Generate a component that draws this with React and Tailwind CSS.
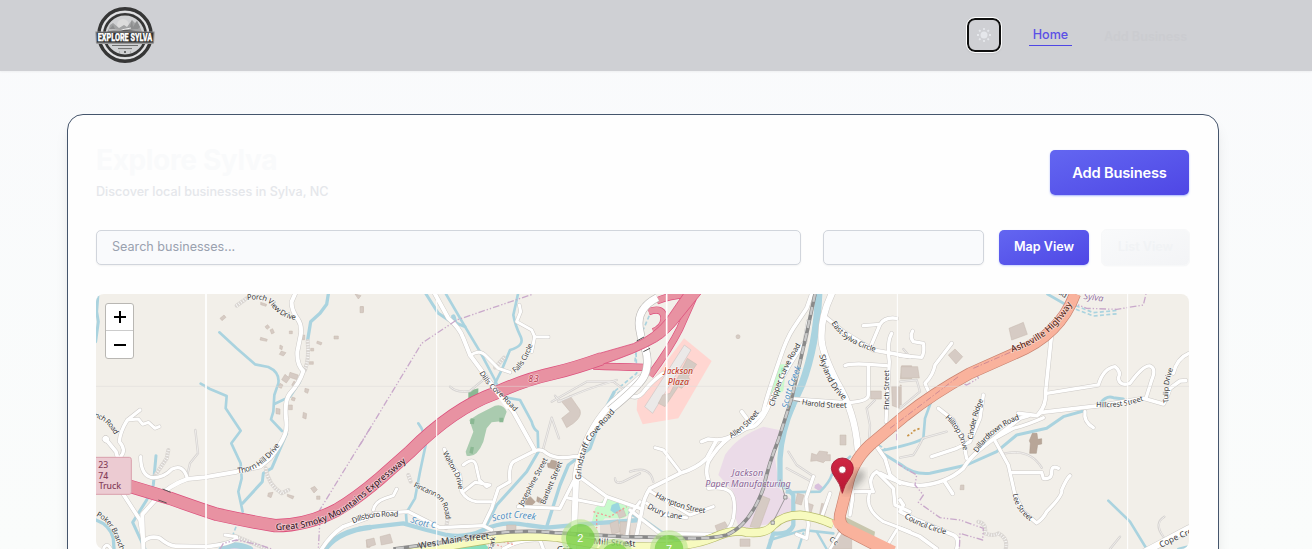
import React from "react";

// Map geometry: four side-by-side tiles, 810 units apart, three units per pixel.
const TILE = 810;

// [tile, path, width]
const streams = [
  [0, "M24 27L20 80L25 110L17 170", 9],
  [0, "M388 142L440 190L495 238L535 246Q570 262 565 295L553 330L550 380L543 403L576 438", 8],
  [0, "M715 27L710 58L690 85L662 110L653 165", 10],
  [0, "M630 290L600 335L553 357", 8],
  [0, "M332 296L360 312L410 333L407 370L452 437L424 475L452 535L455 580L445 620L458 680", 8],
  [0, "M590 445L545 550L520 565L517 590L458 655", 9],
  [0, "M198 512L190 600L170 645L128 712L165 792", 9],
  [0, "M18 705Q60 720 70 760L72 792", 10],
  [0, "M700 800Q740 738 840 727", 16],
  [0, "M395 792Q430 770 480 792", 18],
  [1, "M198 27L235 85L265 105L315 125", 9],
  [1, "M280 95L286 115", 14],
  [1, "M258 27L315 125L360 200L405 285L425 335L480 345L515 410Q520 432 533 440L535 500", 8],
  [1, "M474 27L460 90Q465 120 482 155Q495 182 450 195L425 255L405 295", 8],
  [1, "M175 415Q195 440 197 480L180 560L165 640L138 685L140 715", 8],
  [1, "M0 730L130 715L200 735L260 750Q320 760 370 735Q430 705 500 720L560 728L700 715L840 705", 13],
  [1, "M535 500L500 560L410 660L380 720", 9],
  [1, "M560 725L600 600L625 540L690 490Q720 400 762 322", 10],
  [2, "M566 27Q560 180 515 300L482 370", 22],
  [2, "M490 360Q455 440 450 520L450 600", 16],
  [2, "M450 590L490 630L490 720Q480 750 430 745L415 792", 13],
  [2, "M470 622L570 620Q600 590 605 570L660 515", 8],
  [2, "M0 685L40 705L90 740L150 770", 12],
  [2, "M420 765L520 735L610 745", 8],
  [2, "M520 745L505 792M560 740L590 792", 7],
  [3, "M95 345L75 400L70 460Q50 475 -60 498", 8],
  [3, "M-60 500L0 537Q40 570 90 565L200 540L290 500L350 450L440 430L490 395L550 378", 9],
  [3, "M600 355Q620 330 640 338L670 342", 9],
  [3, "M442 27L510 66", 8],
  [3, "M625 647L690 710L740 792", 8],
  [3, "M835 792L867 784", 8],
];
const dashedStreams = [
  [0, "M438 725L428 752"],
  [1, "M765 318L830 265L828 195"],
  [1, "M772 326L840 272"],
  [2, "M65 75L50 110L20 180L14 240"],
  [3, "M510 55L580 83L655 76"],
  [3, "M510 66L580 93L655 86"],
  [3, "M-80 470L-40 495"],
];
const tracks = [
  [0, "M316 435L324 505L300 535L292 570"],
  [1, "M270 305Q290 325 330 318L375 280"],
  [1, "M575 350L680 290L760 290L800 320"],
  [1, "M585 332L600 350M550 490L575 398L597 460"],
  [1, "M595 350Q680 310 770 285M765 580Q765 600 790 590L840 565"],
  [2, "M475 500L500 540L545 570M470 550L545 590"],
  [2, "M0 560Q60 540 70 590"],
  [2, "M735 345L710 370L720 420L715 500"],
  [3, "M0 370L60 320L50 285L0 290"],
  [3, "M0 518L40 510Q60 480 68 460L140 440"],
  [3, "M315 505Q390 490 425 548"],
  [3, "M790 755Q760 715 793 695"],
  [3, "M630 792L660 755M10 192L25 210"],
];
const roads = [
  [0, "M615 27L605 50Q603 75 625 105Q635 120 633 145L622 200Q620 240 640 258Q628 295 600 325Q583 345 588 400Q592 430 585 448Q572 480 540 520L510 545L440 560L345 577L292 582Q240 600 200 640L157 688L160 792", 13],
  [0, "M100 628L150 705L160 770Q180 750 210 760Q240 785 260 783L345 785Q420 778 440 760", 12],
  [0, "M150 375L112 405Q90 440 88 470Q110 495 92 515", 11],
  [0, "M112 405L145 402L158 418L175 412L195 430L208 425", 10],
  [0, "M47 462L78 500L82 515", 12],
  [0, "M47 462L48 463", 20],
  [0, "M152 515Q152 570 185 578Q220 580 245 553Q280 535 292 580", 11],
  [0, "M690 800Q720 750 760 725L830 700", 12],
  [0, "M405 750L440 755", 10],
  [0, "M40 792Q50 770 62 792", 10],
  [1, "M225 27L265 100Q300 130 310 160L330 210L400 305L460 380L525 497", 13],
  [1, "M330 212Q360 190 380 215L415 250L450 262", 10],
  [1, "M478 60L482 80L470 110L515 135L524 155L565 156", 10],
  [1, "M524 155L515 200", 10],
  [1, "M525 497L460 530Q445 545 450 590L415 610L395 670L370 722", 11],
  [1, "M525 497Q545 490 560 505Q590 525 640 515L665 515", 11],
  [1, "M0 700L50 685L145 680L240 728L370 722L395 735", 11],
  [1, "M40 675Q45 650 75 640L100 632L110 612", 10],
  [1, "M253 492L262 525L300 570L305 620Q320 645 350 650L395 650", 10],
  [1, "M310 540Q345 510 350 550L358 585L380 605L390 600L345 592L310 620", 10],
  [1, "M475 665L600 670L640 590L665 580L740 635L840 670", 11],
  [1, "M740 635L730 660L620 638", 10],
  [1, "M840 650L810 690L800 757M600 757L840 757", 10],
  [1, "M400 745L390 792M430 792Q480 760 540 765L550 792", 11],
  [1, "M640 792L648 590Q645 560 660 520Q690 420 760 350L840 280", 19],
  [2, "M0 332Q25 345 45 315Q70 285 100 265", 12],
  [2, "M545 27L530 70L490 130Q470 160 450 220Q405 350 400 380Q330 460 260 465L230 520Q200 550 150 565L60 610Q40 640 35 680L20 750", 12],
  [2, "M535 110L525 170Q480 230 430 330Q400 410 370 425Q290 440 235 530Q225 560 235 585", 12],
  [2, "M75 488L100 495L150 560", 10],
  [2, "M260 465L235 462L215 470M335 380L350 400", 12],
  [2, "M60 618L95 640L180 690L250 665M50 655L100 690L170 698", 10],
  [2, "M235 610Q280 605 300 620Q320 640 310 700Q300 740 270 748L90 745L0 675", 11],
  [2, "M605 27Q570 100 575 170Q580 210 620 290Q675 380 683 490", 20],
  [2, "M585 95L640 140L730 195L840 215", 12],
  [2, "M700 122L750 118L722 185M750 118Q765 95 800 100", 11],
  [2, "M645 242Q660 235 715 238L770 242M715 238L715 330Q715 350 650 353L490 342", 11],
  [2, "M785 145Q770 170 778 230L768 410", 11],
  [2, "M550 575L528 640L535 720L530 760L500 748", 11],
  [2, "M600 625L570 710M665 590L668 640L660 690", 11],
  [2, "M730 470L765 520L780 570L810 595", 12],
  [2, "M670 620L730 620Q710 580 740 560L790 610L795 660L840 680", 11],
  [2, "M720 620Q700 670 760 710L840 740M800 735L765 792", 10],
  [2, "M630 745L600 792", 9],
  [3, "M-60 565Q10 602 60 602Q140 595 190 550Q210 515 250 485L360 400L385 392", 12],
  [3, "M430 398Q380 420 340 430L282 462L325 540L345 630L370 680L410 714Q430 700 440 680Q490 630 485 615Q500 580 510 572", 11],
  [3, "M332 563L425 562L430 580Q455 585 455 560Q455 540 475 550", 11],
  [3, "M355 385L410 392L425 382L600 362L730 340L790 357Q800 340 810 310L840 288L857 287", 12],
  [3, "M455 145L437 320Q440 360 415 388", 12],
  [3, "M440 325L595 300Q610 250 645 245Q665 260 655 280Q660 305 690 295Q730 240 750 243Q770 250 755 285L738 340", 11],
  [3, "M820 265Q830 220 867 205", 11],
  [3, "M555 380Q550 410 580 428", 11],
  [3, "M115 370L160 405L190 470L200 520M250 330L240 400L210 470L170 490L95 515", 11],
  [3, "M133 588L158 626", 12],
  [3, "M155 175L105 240Q100 270 75 295L85 318", 11],
  [3, "M38 138Q28 155 40 170L70 175Q75 200 65 217L0 212", 11],
  [3, "M0 645L10 660L0 680L50 705L160 750Q180 760 170 792M0 730L60 755L110 792", 12],
  [3, "M735 800L867 730", 20],
];
const footways = [
  [0, "M440 62L470 40"], [0, "M653 168Q658 220 645 255"], [0, "M235 495L230 520L195 572"],
  [0, "M527 550Q535 600 575 625L595 615"], [0, "M440 755L530 792"], [1, "M145 570L152 590"],
  [1, "M432 218L405 248"], [1, "M265 690L258 730"], [3, "M235 710Q260 715 255 745Q280 755 295 745Q325 760 317 792"],
];
const boundaries = [
  [0, "M840 430L680 690L690 700L685 792"],
  [0, "M390 792L400 775L440 765L510 780L545 792"],
  [1, "M0 480L185 175L290 105L520 27"],
  [3, "M510 50L560 70L650 73L730 60L738 27"],
  [3, "M-20 420L30 385L175 275L180 293L200 300L235 280L222 250L335 197"],
  [3, "M-10 535L50 570L45 600L70 630L55 652L120 698L180 705L250 730L248 765L180 745L178 792"],
  [2, "M800 400L800 470"],
];
const buildings = [
  [0, "M390 100l12-10 6 7-12 10zM525 125l8-6 6 8-8 6zM540 135l8-4 5 12-8 4zM512 157l20 6-2 6-20-4zM598 138h9v8h-9zM512 52l18 6-2 6-16-5zM795 27l18 5-8 10zM812 65h8v15h-8zM570 180l8 4-2 10-7-3zM574 198l14 5-8 10-12-5zM635 150h9v14h-9zM662 190h9v8h-9zM682 168l14 5-3 7-13-5zM732 153h13v9h-13zM585 268l14 12-10 14-14-10zM600 262l25 8-5 14-24-8zM570 295l9 5-5 10-9-4zM612 288l10 8-10 12-7-8zM645 310l12 3-4 12-9-4zM606 336l10 3-3 9-9-3zM595 360h12v14h-12zM558 370l12 2v16l-12-2zM640 382l10 4-2 16-10-4zM662 610l12-6 8 10-10 10zM680 633h10v10h-10zM535 624l14-2-6 16-10-4zM592 628l20 6-4 8-16-8zM830 765l10 0v22h-10zM658 230h12v8h-12z"],
  [1, "M605 350L630 332L660 375Q670 400 620 428L605 400L630 380ZM60 755l30-8 8 26-34 7zM18 765l24-6 5 20-24 8zM440 720h28v18h-28zM750 715l24-10 6 35-24 8zM780 710l30 0v38h-30zM770 680l20-8 8 20-20 8zM0 65h10v18h-10z"],
  [2, "M120 325L172 220L200 238L175 275L180 285L155 310L145 305L105 365L85 355L98 330ZM545 505l15 5 8-12 25 3-2 8 10 0v18l-15 0-6 6-20-6-18 2zM722 318h32v24h-32zM785 305h26l-2 65-22-8zM815 242h30v40h-34zM395 632L420 642 388 730 360 725ZM318 155a6 6 0 1 0 12 0a6 6 0 1 0-12 0zM630 450h18v30h-18zM502 625l20 5-8 30-18-5zM535 655l15 5-8 28-14-5zM575 655l18 5-12 40-14-5zM255 722l30-12 8 14-30 18zM610 770l15-30 40 10 0 42h-60zM330 762h30v22h-30zM640 580h25l-5 40h-18z"],
  [3, "M327 130L370 112L382 148L335 165ZM145 210L165 192 188 215 168 237ZM3 245h50l5 34-55 0zM182 600h10v14h-12zM0 300h4v60h-4z"],
];
const darkBuildings = [
  [3, "M397 445l14 0 2 18 12-2 0 16-12 2-4 26-20 0 2-30-3-8z"],
  [1, "M495 645l16-10 15 16-14 13-16-6zM562 535l8 0 4-10 16 4 8 12-12 12-22-6zM532 635l14 8-4 12-12-6z"],
];

// [tile, path, size, colour, weight, italic, text, length]
const ink = "#3a3a3a";
const labels = [
  [0, "M472 45Q525 38 545 63Q568 98 622 106", 23, ink, 400, false, "Porch View Drive", 163],
  [0, "M12 396Q55 408 76 455", 22, ink, 400, false, "nch Road", 84],
  [0, "M443 565Q515 560 570 480", 23, ink, 400, false, "Thorn Hill Drive", 157],
  [0, "M18 692Q55 712 70 745L92 800", 22, ink, 400, false, "Poker Branch", 132],
  [0, "M557 735Q690 735 790 663L957 524", 27, "#43202a", 500, false, "Great Smoky Mountains Expressway", 455],
  [0, "M790 716Q840 690 926 695", 23, ink, 400, false, "Dillsboro Road", 138],
  [1, "M358 264Q380 305 415 330L462 378", 22, ink, 400, false, "Dills Cove Road", 158],
  [1, "M464 264Q495 245 518 180", 22, ink, 400, false, "Falls Circle", 102],
  [1, "M505 291L545 291", 26, "#b8394d", 400, true, "83", 31],
  [1, "M248 503L278 560Q292 580 296 616", 22, ink, 400, false, "Walton Drive", 122],
  [1, "M160 605L215 630Q255 645 257 706", 22, ink, 400, false, "Fincannon Road", 150],
  [1, "M150 710Q185 727 235 730", 26, "#4f8ec0", 400, true, "Scott C", 80],
  [1, "M398 710Q460 690 530 706", 27, "#4f8ec0", 400, true, "Scott Creek", 130],
  [1, "M488 664L564 522", 22, ink, 400, false, "Josephine Street", 160],
  [1, "M554 660L608 532", 22, ink, 400, false, "Bartlett Street", 138],
  [1, "M662 585Q668 500 700 455L766 380", 24, ink, 400, false, "Grindstaff Cove Road", 235],
  [1, "M178 792Q280 770 388 762", 27, "#333", 400, false, "West Main Street", 212],
  [1, "M700 777L830 786", 25, "#333", 400, false, "Mill Street", 126],
  [1, "M590 803L640 803", 27, "#333", 400, false, "Grin", 50],
  [1, "M400 798L406 755", 21, ink, 400, false, "Park", 42],
  [2, "M102 267L192 267", 26, "#c4432f", 500, true, "Jackson", 87],
  [2, "M113 300L180 300", 26, "#c4432f", 500, true, "Plaza", 64],
  [2, "M306 573L402 573", 27, "#8a6596", 400, true, "Jackson", 94],
  [2, "M226 605L485 605", 27, "#8a6596", 400, true, "Paper Manufacturing", 256],
  [2, "M432 365Q460 260 513 180", 23, ink, 400, false, "Chipper Curve Road", 202],
  [2, "M474 370Q478 320 515 245", 26, "#4f8ec0", 400, true, "Scott Creek", 130],
  [2, "M304 460Q355 430 388 382", 23, ink, 400, false, "Allen Street", 115],
  [2, "M74 635Q145 675 228 685", 23, ink, 400, false, "Hampton Street", 160],
  [2, "M50 668Q100 700 158 702", 23, ink, 400, false, "Drury Lane", 113],
  [2, "M604 115Q640 175 740 202", 23, ink, 400, false, "East Sylva Circle", 160],
  [2, "M568 210Q585 300 645 350", 25, ink, 400, false, "Skyland Drive", 157],
  [2, "M515 358Q570 370 652 368", 23, ink, 400, false, "Harold Street", 136],
  [2, "M777 375L777 255", 22, ink, 400, false, "Finch Street", 120],
  [2, "M-18 784L18 782", 26, "#333", 400, false, "et", 26],
  [2, "M596 765L640 800", 22, ink, 400, false, "Cc", 28],
  [3, "M336 202Q455 165 516 58", 27, "#5b2c22", 500, false, "Asheville Highway", 238],
  [3, "M474 27L500 42", 22, ink, 400, false, "ad", 25],
  [3, "M550 42L612 50", 27, "#95719f", 400, true, "Sylva", 60],
  [3, "M135 398Q180 440 190 498", 22, ink, 400, false, "Hilltop Drive", 115],
  [3, "M218 464Q225 400 252 342", 22, ink, 400, false, "Cinder Ridge", 124],
  [3, "M232 504Q280 430 362 402", 23, ink, 400, false, "Dillardtown Road", 165],
  [3, "M588 366Q660 372 732 346", 22, ink, 400, false, "Hillcrest Street", 145],
  [3, "M806 353Q800 300 820 250", 22, ink, 400, false, "Tulip Drive", 103],
  [3, "M338 627Q345 680 398 713", 22, ink, 400, false, "Lee Street", 100],
  [3, "M12 698Q70 733 138 748", 23, ink, 400, false, "Council Circle", 135],
  [3, "M783 788Q830 765 885 742", 25, ink, 400, false, "Cope Cre", 106],
];

function Lines({ items, color, extra = 0, width, dash, cap = "round" }) {
  return (
    <g fill="none" stroke={color} strokeLinecap={cap} strokeLinejoin="round" strokeDasharray={dash}>
      {items.map(([t, d, w], i) => (
        <path key={i} d={d} strokeWidth={width || w + extra} transform={`translate(${t * TILE} 0)`} />
      ))}
    </g>
  );
}

function Shapes({ items, fill, stroke }) {
  return items.map(([t, d], i) => (
    <path key={i} d={d} fill={fill} stroke={stroke} strokeWidth="1.5" transform={`translate(${t * TILE} 0)`} />
  ));
}

function Cluster({ x, y, n }) {
  return (
    <g>
      <circle cx={x} cy={y} r="57" fill="#b5e28c" fillOpacity="0.6" />
      <circle cx={x} cy={y} r="43" fill="#6ecc39" fillOpacity="0.65" />
      <text x={x} y={y + 11} textAnchor="middle" fontSize="33" fill="#fff" fontFamily="Liberation Sans, sans-serif">{n}</text>
    </g>
  );
}

const expressway = "M100 598L240 640Q330 672 380 688Q470 708 555 722Q650 722 740 675Q800 640 870 580L960 500Q1090 370 1215 325Q1300 285 1390 265Q1460 248 1535 221";
const interchange = "M1525 206L1630 176Q1690 150 1730 100L1785 20H1838L1775 98Q1735 150 1700 170Q1640 205 1525 242";
const sideRamps = "M1510 243Q1580 246 1662 247M1680 272Q1740 190 1770 130L1810 40";
const loopRamps = "M1676 80Q1722 64 1722 102Q1720 128 1690 140M1700 48Q1740 30 1790 30";
const mainStreet = "M940 806Q1100 778 1200 763Q1320 748 1400 757L1560 785L1660 785Q1790 790 1870 758Q1930 730 1970 742Q2030 748 2050 720Q2080 690 2130 690Q2180 695 2230 718";
const railway = "M2175 27L2150 145L2105 340L2065 465Q2035 540 2020 610Q1980 720 1910 750Q1850 765 1750 758L1600 755L1390 743Q1250 728 1080 769L910 792";
const highway = "M2395 800L2280 740Q2245 725 2250 690L2270 610Q2285 530 2340 480L2445 392Q2530 325 2640 265L2775 205Q2910 150 2955 27";

function StreetMap() {
  return (
    <svg className="block h-[255px] w-full" viewBox="18 27 3279 765" fontFamily="'Noto Sans', sans-serif" aria-label="Map of Sylva">
      <defs>
        <linearGradient id="pin" x1="0" y1="0" x2="0" y2="1">
          <stop offset="0" stopColor="#cf2744" />
          <stop offset="1" stopColor="#b81733" />
        </linearGradient>
        <filter id="soft"><feGaussianBlur stdDeviation="9" /></filter>
      </defs>
      <rect x="0" y="0" width="3330" height="820" fill="#f2efe9" />

      {/* land use */}
      <path d="M1642 345L1782 160L1865 228L1765 400L1658 418L1640 375Z" fill="#ffd6d1" />
      <path d="M2020 425L2068 435L2055 520L2068 610L2110 650L2100 710L2020 720L1950 735L1925 670L1930 620L1885 570L1905 510Q1940 455 2020 425Z" fill="#ebdbe8" />
      <path d="M2175 600l10-5 14 12-12 10-14-8z" fill="#d9c0dd" />
      <path d="M2070 238h20l-10 80-28 20-15-20z" fill="#c8facc" />
      <path d="M2075 248h12v20h-14z" fill="#8fdfc0" />
      <path d="M1165 388L1215 362Q1240 355 1250 380L1240 408L1205 412L1190 430L1180 470Q1160 520 1130 512L1127 500L1150 440L1138 405Z" fill="#aacbaf" />
      <path d="M1135 318l30-8v22l-30 8zM1142 400l12 2-2 16-12-2zM1228 398h12v14h-12zM1142 485l10 2-4 20-10-4z" fill="#8bb893" />
      <path d="M1515 670L1545 640L1600 645L1630 680L1600 700L1545 700L1520 725L1505 715Z" fill="#c8facc" />
      <path d="M1565 660l20-8 8 24-18 10-14-10z" fill="#9ad6df" />
      <path d="M1530 715L1640 705L1640 750L1530 755Z" fill="#e6ddd6" />
      <path d="M1080 792Q1110 758 1180 772L1200 792Z" fill="#88e0be" />
      <path d="M400 792Q430 778 500 792Z" fill="#e8d4e8" />
      <path d="M2265 695L2355 740L2350 775L2260 730Z" fill="#c8c6ad" />
      <path d="M2658 405l4 0-4 26h-6z" fill="#c8facc" />
      <path d="M1664 365L1783 180L1803 195L1688 385Z" fill="#ebe9e8" stroke="#cfc6c4" strokeWidth="2" />

      <Lines items={streams} color="#aad3df" />
      <Lines items={dashedStreams} color="#aad3df" width={5} dash="12 7" cap="butt" />
      <Shapes items={buildings} fill="#d6cbc4" stroke="#c6b9af" />
      <Shapes items={darkBuildings} fill="#b8a698" stroke="#a89789" />
      <Lines items={tracks} color="#d5d2d0" width={7} />
      <Lines items={tracks} color="#efedeb" width={3} />
      <Lines items={footways} color="#dad6d2" width={12} />
      <Lines items={footways} color="#fff" width={9} dash="2 6" cap="butt" />
      <Lines items={roads} color="#cdcac7" extra={2} />
      <Lines items={roads} color="#fff" extra={-1} />
      <Lines items={boundaries} color="#c9a9cb" width={4} dash="20 6 4 6 4 6" cap="butt" />
      <path d="M2452 453l15-10M2470 438l20-8" stroke="#c99448" strokeWidth="5" strokeDasharray="7 6" />
      <path d="M1510 680l50 15 50-30M1520 690l0 40M1240 770l35 10M1210 775l25 10" stroke="#ee9d98" strokeWidth="4" fill="none" strokeDasharray="6 6" />

      {/* main street and railway */}
      <g fill="none">
        <path d={mainStreet} stroke="#b6ba6c" strokeWidth="27" />
        <path d={mainStreet} stroke="#f7fabf" strokeWidth="23" />
        <path d={railway} stroke="#8a8a8a" strokeWidth="11" />
        <path d={railway} stroke="#c9c9c9" strokeWidth="7" strokeDasharray="24 16" />
      </g>

      {/* expressway with its ramps */}
      <g fill="none" strokeLinejoin="round">
        <path d={`${sideRamps}${loopRamps}`} stroke="#dc4f7c" strokeWidth="22" />
        <path d={`${sideRamps}${loopRamps}`} stroke="#e892a2" strokeWidth="18" />
        <path d="M1702 38Q1640 70 1648 128L1655 165M1664 185Q1682 240 1660 278Q1640 310 1560 375" stroke="#bebbb8" strokeWidth="25" />
        <path d="M1702 38Q1640 70 1648 128L1655 165M1664 185Q1682 240 1660 278Q1640 310 1560 375" stroke="#fff" strokeWidth="21" />
        <path d={expressway} stroke="#dc4f7c" strokeWidth="40" />
        <path d={interchange} fill="#e892a2" stroke="#dc4f7c" strokeWidth="2.5" />
        <path d={expressway} stroke="#e892a2" strokeWidth="36" />
        <path d="M1640 168L1662 156M1660 200L1680 190M218 612L242 622M205 645L230 654" stroke="#555" strokeWidth="3" />
        <path d="M1195 285L1255 370" stroke="#fff" strokeWidth="11" />
      </g>

      {/* highway */}
      <g fill="none">
        <path d={highway} stroke="#c98472" strokeWidth="36" />
        <path d={highway} stroke="#f9b29c" strokeWidth="32" />
        <path d="M2225 705L2250 708L2290 750L2235 728Z" fill="#f9b29c" />
        <path d="M2260 727L2410 800" stroke="#f9b29c" strokeWidth="34" />
        <path d="M2400 430L2605 275M2650 250L2765 200" stroke="#cf8a94" strokeWidth="3" strokeDasharray="18 6 4 6" />
        <path d="M2048 713L2086 638L2070 582M2108 345L2130 350" stroke="#777" strokeWidth="2" />
        <path d="M2043 708h10v10h-10zM2081 632h10v10h-10z" stroke="#888" strokeWidth="2.5" fill="#ddd" />
      </g>

      <path d="M10 517H118Q124 517 124 524V620Q124 628 118 628H10Z" fill="#eccbd2" stroke="#d9a1ad" strokeWidth="3" />
      <g fill="#85405a" fontSize="26" fontWeight="500">
        <text x="25" y="549">23</text>
        <text x="25" y="581">74</text>
        <text x="26" y="612" textLength="67">Truck</text>
      </g>

      {labels.map(([t, d, size, color, weight, italic, text, length], i) => (
        <g key={i} transform={`translate(${t * TILE} 0)`}>
          <path id={`street-${i}`} d={d} fill="none" />
          <text fontSize={size} fill={color} fontWeight={weight} fontStyle={italic ? "italic" : "normal"} stroke="#fff" strokeOpacity="0.55" strokeWidth="4" paintOrder="stroke">
            <textPath href={`#street-${i}`} textLength={length}>{text}</textPath>
          </text>
        </g>
      ))}

      {/* seams between tiles */}
      <path d="M18 304H3297" stroke="#dcdad6" strokeWidth="1.5" />
      <path d="M348 27V792M1730 27V792" stroke="#fff" strokeWidth="5" />
      <path d="M1040 27V792M2422 27V792M3113 27V792" stroke="#fff" strokeWidth="3" />

      <Cluster x={1575} y={818} n="" />
      <Cluster x={1471} y={760} n="2" />
      <Cluster x={1737} y={793} n="7" />

      <path d="M2262 622L2295 560Q2320 545 2325 570Q2318 598 2265 628Z" fill="#222" opacity="0.3" filter="url(#soft)" />
      <path d="M2257 625Q2250 595 2235 577Q2224 562 2224 550A33 31 0 0 1 2290 550Q2290 564 2279 579Q2263 600 2257 625Z" fill="url(#pin)" stroke="#a01c36" strokeWidth="2.5" />
      <circle cx="2257" cy="554" r="11" fill="#fff" stroke="#a01c36" strokeWidth="2" />
    </svg>
  );
}

function Logo() {
  return (
    <svg className="h-14 w-[60px]" viewBox="0 0 60 56" aria-label="Explore Sylva">
      <circle cx="30" cy="28" r="26.2" fill="#cfd0d4" stroke="#363636" strokeWidth="3.4" />
      <circle cx="30" cy="28" r="23.4" fill="none" stroke="#e4e4e5" strokeWidth="1.4" />
      <circle cx="30" cy="28" r="20.8" fill="#d0d1d3" stroke="#363636" strokeWidth="2.6" />
      <circle cx="28" cy="18" r="6" fill="#dcdcdc" />
      <path d="M12 27L15 18L18 16L24 21L29 18L32 20L37 13L40 16L42 14L45 20L48 27Z" fill="#a2a3a4" />
      <path d="M37 13L38 20L42 14L45 20L43 22L39 22L34 23ZM13 24L18 18L20 22Z" fill="#8d8e8f" />
      <path d="M11 25Q25 20 32 23L49 25V28H11Z" fill="#575757" />
      <path d="M14 23Q27 24 36 21" stroke="#eee" fill="none" />
      <path d="M1 25H59L58.5 36H1.5Z" fill="#353535" stroke="#8a8a8b" strokeWidth="1.1" />
      <path d="M2 36.5H58" stroke="#999" />
      <text x="2.8" y="34.2" fontFamily="Roboto, 'Liberation Sans', sans-serif" fontSize="10.4" fontWeight="900" fill="#fff" stroke="#fff" strokeWidth="0.25" textLength="54.4" lengthAdjust="spacingAndGlyphs">EXPLORE SYLVA</text>
      <path d="M17 38.5H43M23 41.6H37" stroke="#626262" strokeWidth="0.9" />
      <circle cx="30" cy="45" r="1" fill="#444" />
      <path d="M24.5 44.5v1M35.5 44.5v1" stroke="#999" />
    </svg>
  );
}

function Sun() {
  return (
    <svg className="h-4 w-4" viewBox="0 0 16 16" fill="#e5e7eb">
      <circle cx="8" cy="8" r="3.5" />
      <path d="M8 1v2M8 13v2M1 8h2M13 8h2M3.1 3.1l1.4 1.4M11.5 11.5l1.4 1.4M3.1 12.9l1.4-1.4M11.5 4.5l1.4-1.4" stroke="#e5e7eb" strokeWidth="1.8" />
    </svg>
  );
}

export default function App() {
  return (
    <div className="h-[549px] overflow-hidden bg-linear-to-b from-[#f9fafc] to-[#fafcfb] font-['Inter',sans-serif]">
      <header className="h-[71px] bg-[#cfd0d4] shadow-xs">
        <div className="flex h-full w-[1286px] items-center justify-between pl-[95px] pr-[100px] pb-px">
          <Logo />
          <nav className="flex items-center text-[12.6px] font-medium leading-5">
            <button className="flex h-[34px] w-[34px] items-center justify-center rounded-lg border-2 border-[#101010] shadow-sm outline-1 outline-white" aria-label="Theme">
              <Sun />
            </button>
            <a className="ml-7 flex h-[21px] w-[43px] justify-center border-b border-[#4f46e5] text-[#5b50e6]">Home</a>
            <a className="ml-8 mt-1 w-[82px] whitespace-nowrap font-semibold text-[#cbccd0]">Add Business</a>
          </nav>
        </div>
      </header>

      <main className="w-[1286px] px-[67px] pt-[43px]">
        <section className="h-[600px] rounded-2xl border border-slate-600 bg-[#fefefe] px-7 pt-[35px] shadow-lg">
          <div className="flex items-start justify-between">
            <div className="-mt-2">
              <h1 className="text-[28px] font-bold leading-9 tracking-[-0.35px] text-[#f9fafb]">Explore Sylva</h1>
              <p className="mt-1 text-[12.6px] font-medium leading-5 text-[#e5e7eb]">Discover local businesses in Sylva, NC</p>
            </div>
            <button className="mr-px h-[45px] w-[139px] rounded-[5px] bg-linear-to-br from-[#6366f1] to-[#4f46e5] pt-0.5 text-[14.7px] font-semibold tracking-[-0.2px] text-white shadow-xs shadow-indigo-300">
              Add Business
            </button>
          </div>

          <div className="mt-[28px] flex h-[35px] pr-px">
            <input className="w-[705px] shrink-0 rounded-[5px] border border-gray-300 bg-[#f9fafc] px-[15px] text-[12.6px] text-gray-600 shadow-xs placeholder:text-gray-400" placeholder="Search businesses..." />
            <div className="ml-[22px] w-[161px] shrink-0 rounded-[5px] border border-gray-300 bg-[#f9fafc] shadow-xs" />
            <button className="ml-[15px] w-[90px] shrink-0 rounded-[5px] bg-linear-to-br from-[#6366f1] to-[#4f46e5] text-[12.6px] font-semibold text-white shadow-xs shadow-indigo-200">Map View</button>
            <button className="ml-[13px] w-[87px] shrink-0 rounded-[5px] bg-linear-to-br from-[#f9fafb] to-[#f3f4f6] text-[12.6px] font-semibold text-[#f1f3f5] shadow-xs outline-1 outline-[#f7f8f9]">List View</button>
          </div>

          <div className="relative mt-[29px] mr-px overflow-hidden rounded-lg">
            <StreetMap />
            <div className="absolute left-[9px] top-[9px] flex w-[29px] flex-col rounded-[3px] border border-[#b9b7b3] bg-white text-black">
              <button className="flex h-[27px] items-center justify-center border-b border-[#ccc]" aria-label="Zoom in">
                <svg className="h-3 w-3" viewBox="0 0 12 12" stroke="#000" strokeWidth="2"><path d="M0 6h12M6 0v12" /></svg>
              </button>
              <button className="flex h-[27px] items-center justify-center" aria-label="Zoom out">
                <svg className="h-3 w-3" viewBox="0 0 12 12" stroke="#000" strokeWidth="2"><path d="M0 6h12" /></svg>
              </button>
            </div>
          </div>
        </section>
      </main>
    </div>
  );
}
